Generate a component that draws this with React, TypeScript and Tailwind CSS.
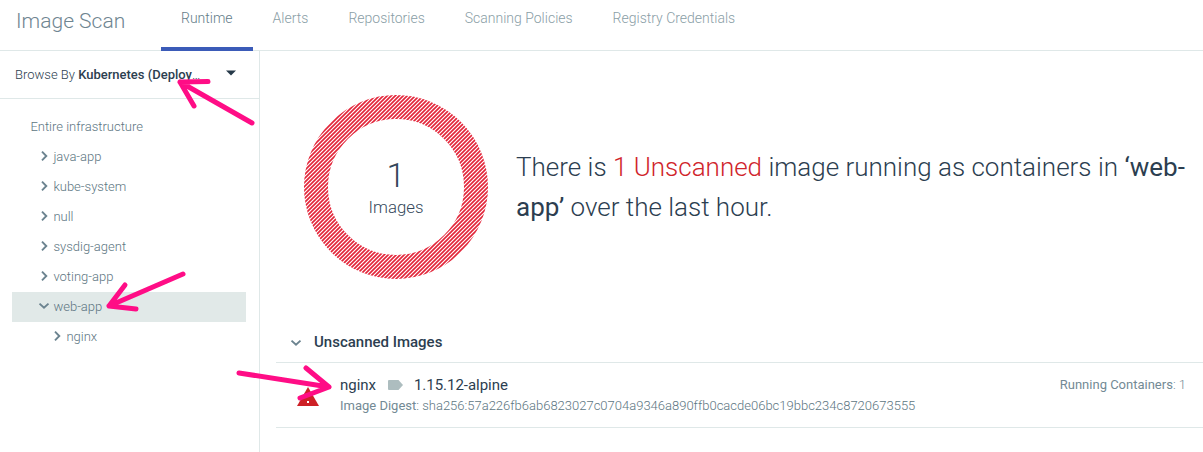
import React from "react";

const tabs = ["Runtime", "Alerts", "Repositories", "Scanning Policies", "Registry Credentials"];
const namespaces = ["java-app", "kube-system", "null", "sysdig-agent", "voting-app"];

function Chevron({ down = false, className = "" }: { down?: boolean; className?: string }) {
  return (
    <svg className={className} width="12" height="12" viewBox="0 0 12 12" fill="none" stroke="#6b838f" strokeWidth="1.900">
      <path d={down ? "M1.5 3.6 6 7.8l4.500-4.200" : "M4 1.700 8.300 6 4 10.300"} />
    </svg>
  );
}

function Header() {
  return (
    <header className="flex h-[51px] shrink-0 border-b border-[#dfe8e8]">
      <h1 className="w-[161px] pl-4 pt-[6px] text-[21px] leading-[30px] font-light text-[#6f8591]">Image Scan</h1>
      <nav className="flex text-[14px] leading-5 font-light whitespace-nowrap">
        {tabs.map((t, i) => (
          <div
            key={t}
            className={
              i === 0
                ? "h-[51px] border-b-4 border-[#3b5bb8] px-5 pt-2 text-[#647d89]"
                : "h-[51px] px-5 pt-2 text-[#8a9ea6]"
            }
          >
            {t}
          </div>
        ))}
      </nav>
    </header>
  );
}

function Sidebar() {
  return (
    <aside className="w-[260px] shrink-0 border-r border-[#dfe8e8]">
      <div className="flex h-12 items-center border-b border-[#dfe8e8] pl-[15px] text-[13px] text-[#2c3e50]">
        <div className="w-[186px] font-light whitespace-nowrap">
          Browse By <span className="font-medium">Kubernetes (Deploy</span>…
        </div>
        <svg className="-mt-[3px] ml-[25px]" width="10" height="6" viewBox="0 0 10 6">
          <path d="M0 .5h10L5 5.500z" fill="#263949" />
        </svg>
      </div>
      <div className="pt-[13px] pl-3 text-[13px] leading-[30px] font-light text-[#5d7682]">
        <div className="pl-[18.400px]">Entire infrastructure</div>
        {namespaces.map((n) => (
          <div key={n} className="flex items-center pl-[26px]">
            <Chevron className="-mt-[2px] mr-[3.400px]" />
            {n}
          </div>
        ))}
        <div className="flex w-[234px] items-center bg-[#e1e9e8] pl-[26px]">
          <Chevron down className="-mt-[2px] mr-[3.400px]" />
          web-app
        </div>
        <div className="flex items-center pl-[39px]">
          <Chevron className="-mt-[2px] mr-[3.400px]" />
          nginx
        </div>
      </div>
    </aside>
  );
}

function Summary() {
  return (
    <section className="flex h-[276px] pt-11 pl-11">
      <div className="grid size-[184px] shrink-0 place-items-center">
        <svg className="col-start-1 row-start-1" width="184" height="184" viewBox="0 0 184 184">
          <defs>
            <pattern id="hatch" width="4" height="4" patternUnits="userSpaceOnUse">
              <path d="M-1 1l2-2M-1 5l6-6M3 5l2-2" stroke="#e3263a" strokeWidth="1.700" />
            </pattern>
          </defs>
          <circle cx="92" cy="92" r="80" fill="none" stroke="url(#hatch)" strokeWidth="24" />
        </svg>
        <div className="col-start-1 row-start-1 flex flex-col items-center font-light text-[#34475a]">
          <span className="text-[34px] leading-10">1</span>
          <span className="text-[16.800px] leading-6">Images</span>
        </div>
      </div>
      <p className="ml-7 w-[680px] pt-[52px] text-[26px] leading-10 font-light text-[#2c3e50]">
        There is <span className="text-[#d0242b]">1 Unscanned</span> image running as containers in{" "}
        <span className="font-normal">‘web-<br />app’</span> over the last hour.
      </p>
    </section>
  );
}

function ImageList() {
  return (
    <section className="ml-4">
      <div className="flex h-9 items-center border-b border-[#dfe8e8] pl-[14px] text-[15px] font-medium text-[#2c3e50]">
        <Chevron down className="-mt-[3px] mr-3" />
        <span className="-mt-1">Unscanned Images</span>
      </div>
      <div className="flex h-[65px] border-b border-[#dfe8e8]">
        <svg className="mt-6 ml-[21px]" width="22" height="19" viewBox="0 0 22 19">
          <path d="M11 0 22 19H0z" fill="#cd2026" />
          <path d="M10 7h2v3h-2zM10 14h2v2h-2z" fill="#fff" />
        </svg>
        <div className="ml-[21px] flex-1 pt-3">
          <div className="flex items-center text-[15px] leading-5 tracking-[-0.030px] text-[#2c3e50]">
            nginx
            <svg className="mr-[11px] ml-3" width="15" height="10" viewBox="0 0 15 10">
              <path d="M1 0h9.500L15 5l-4.500 5H1Q0 10 0 9V1Q0 0 1 0" fill="#adbdbf" />
            </svg>
            1.15.12-alpine
          </div>
          <div className="text-[13px] leading-[22px] text-[#738a95]">
            Image Digest
            <span className="font-light text-[#5d7682]">
              : sha256:57a226fb6ab6823027c0704a9346a890ffb0cacde06bc19bbc234c8720673555
            </span>
          </div>
        </div>
        <div className="pt-3 pr-[17px] text-[13px] leading-5 text-[#738a95]">
          Running Containers<span className="font-light">: 1</span>
        </div>
      </div>
    </section>
  );
}

function Arrows() {
  return (
    <svg
      className="pointer-events-none absolute inset-0"
      width="1203"
      height="452"
      viewBox="0 0 1203 452"
      fill="none"
      stroke="#ff0d86"
      strokeWidth="5"
      strokeLinecap="round"
      strokeLinejoin="round"
    >
      <path d="M252 123 180 82M208 81.500 180 82l14 24" />
      <path d="M183 274 109 306M125 285l-16 21 27 3" />
      <path d="M239 373l90 14M306 368l23 19-29 11" />
    </svg>
  );
}

export default function App() {
  return (
    <div className="relative flex h-[452px] w-[1203px] flex-col overflow-hidden bg-white font-['Roboto',sans-serif]">
      <Header />
      <div className="flex flex-1">
        <Sidebar />
        <main className="flex-1">
          <Summary />
          <ImageList />
        </main>
      </div>
      <Arrows />
    </div>
  );
}
